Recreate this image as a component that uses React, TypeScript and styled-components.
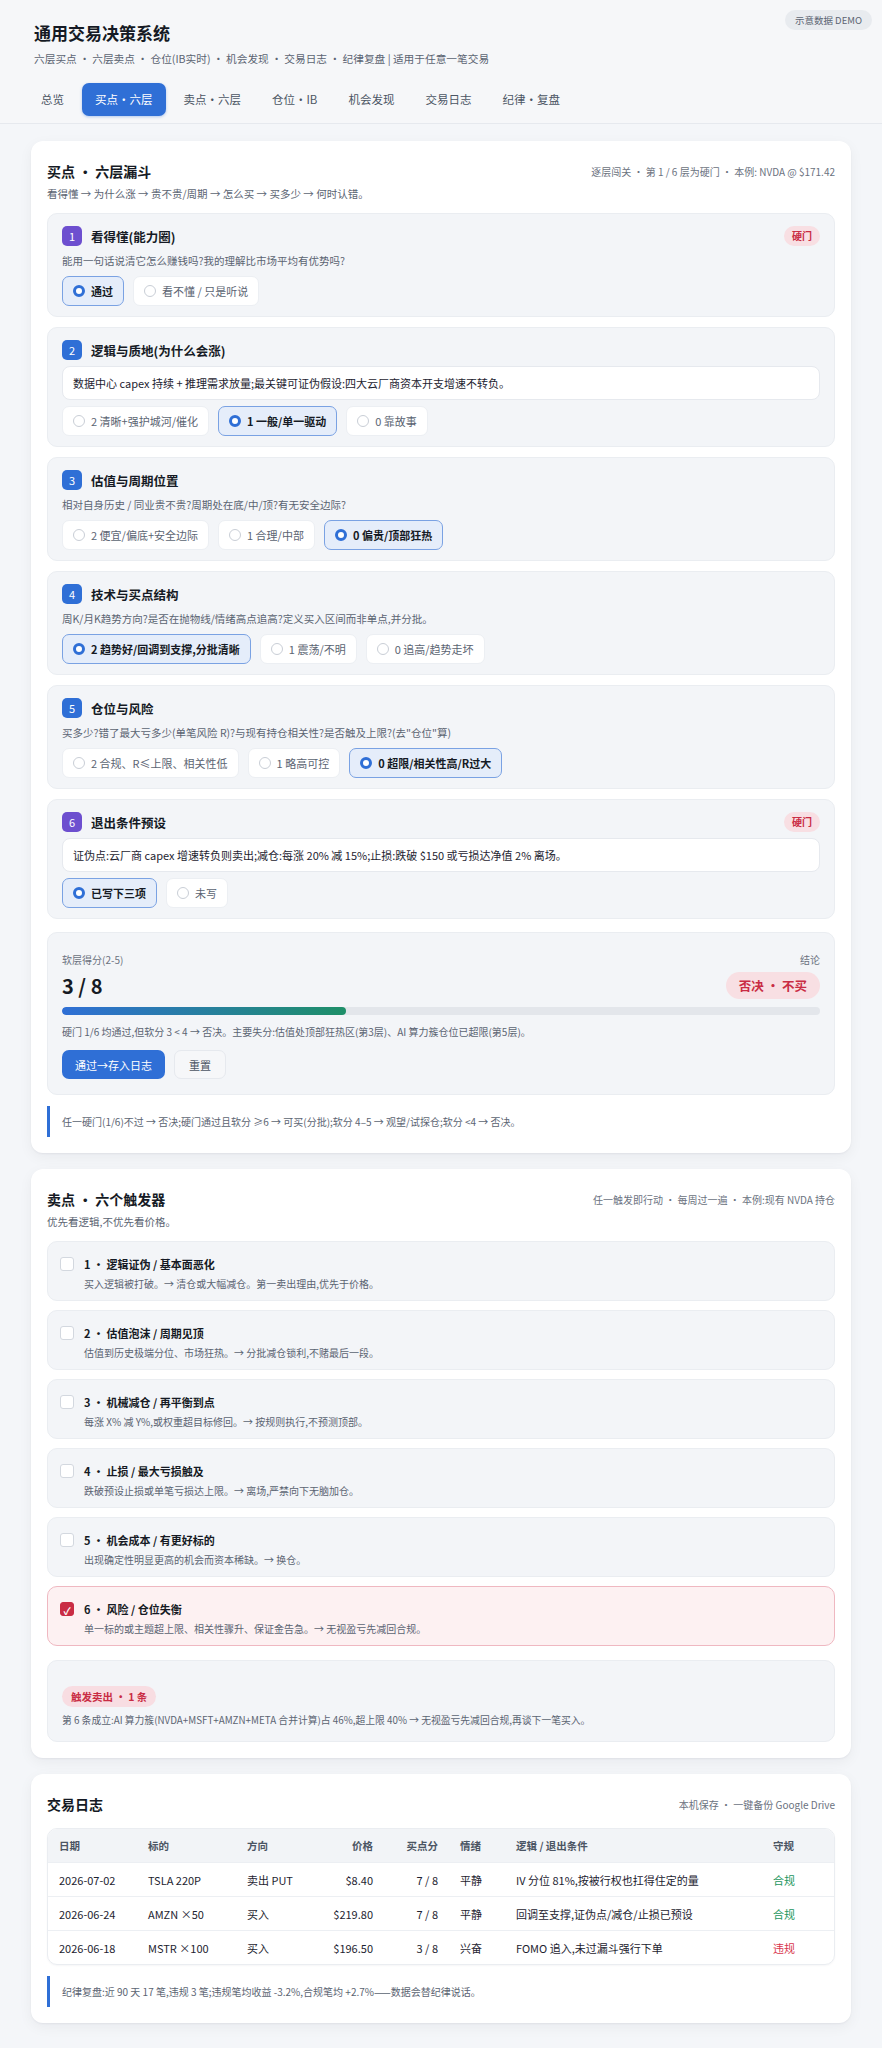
import styled, { createGlobalStyle } from 'styled-components';

const GlobalStyle = createGlobalStyle`
  * { box-sizing: border-box; }
  body {
    margin: 0;
    background: #f4f6f9;
    color: #1d2330;
    font-family: "Noto Sans CJK SC", "Noto Sans", sans-serif;
  }
`;

const BLUE = '#2f6fd6';
const PURPLE = '#6d4fcf';
const RED = '#c92c44';

interface Layer {
  title: string;
  tone: 'purple' | 'blue';
  hard?: boolean;
  desc?: string;
  input?: string;
  options: string[];
  selected: number;
}

const layers: Layer[] = [
  {
    title: '看得懂(能力圈)',
    tone: 'purple',
    hard: true,
    desc: '能用一句话说清它怎么赚钱吗?我的理解比市场平均有优势吗?',
    options: ['通过', '看不懂 / 只是听说'],
    selected: 0
  },
  {
    title: '逻辑与质地(为什么会涨)',
    tone: 'blue',
    input: '数据中心 capex 持续 + 推理需求放量;最关键可证伪假设:四大云厂商资本开支增速不转负。',
    options: ['2 清晰+强护城河/催化', '1 一般/单一驱动', '0 靠故事'],
    selected: 1
  },
  {
    title: '估值与周期位置',
    tone: 'blue',
    desc: '相对自身历史 / 同业贵不贵?周期处在底/中/顶?有无安全边际?',
    options: ['2 便宜/偏底+安全边际', '1 合理/中部', '0 偏贵/顶部狂热'],
    selected: 2
  },
  {
    title: '技术与买点结构',
    tone: 'blue',
    desc: '周K/月K趋势方向?是否在抛物线/情绪高点追高?定义买入区间而非单点,并分批。',
    options: ['2 趋势好/回调到支撑,分批清晰', '1 震荡/不明', '0 追高/趋势走坏'],
    selected: 0
  },
  {
    title: '仓位与风险',
    tone: 'blue',
    desc: '买多少?错了最大亏多少(单笔风险 R)?与现有持仓相关性?是否触及上限?(去"仓位"算)',
    options: ['2 合规、R≤上限、相关性低', '1 略高可控', '0 超限/相关性高/R过大'],
    selected: 2
  },
  {
    title: '退出条件预设',
    tone: 'purple',
    hard: true,
    input: '证伪点:云厂商 capex 增速转负则卖出;减仓:每涨 20% 减 15%;止损:跌破 $150 或亏损达净值 2% 离场。',
    options: ['已写下三项', '未写'],
    selected: 0
  }
];

const triggers = [
  { title: '逻辑证伪 / 基本面恶化', desc: '买入逻辑被打破。→ 清仓或大幅减仓。第一卖出理由,优先于价格。' },
  { title: '估值泡沫 / 周期见顶', desc: '估值到历史极端分位、市场狂热。→ 分批减仓锁利,不赌最后一段。' },
  { title: '机械减仓 / 再平衡到点', desc: '每涨 X% 减 Y%,或权重超目标修回。→ 按规则执行,不预测顶部。' },
  { title: '止损 / 最大亏损触及', desc: '跌破预设止损或单笔亏损达上限。→ 离场,严禁向下无脑加仓。' },
  { title: '机会成本 / 有更好标的', desc: '出现确定性明显更高的机会而资本稀缺。→ 换仓。' },
  { title: '风险 / 仓位失衡', desc: '单一标的或主题超上限、相关性骤升、保证金告急。→ 无视盈亏先减回合规。', hit: true }
];

const trades = [
  { date: '2026-07-02', ticker: 'TSLA 220P', side: '卖出 PUT', price: '$8.40', score: '7 / 8', mood: '平静', logic: 'IV 分位 81%,按被行权也扛得住定的量', ok: true },
  { date: '2026-06-24', ticker: 'AMZN ×50', side: '买入', price: '$219.80', score: '7 / 8', mood: '平静', logic: '回调至支撑,证伪点/减仓/止损已预设', ok: true },
  { date: '2026-06-18', ticker: 'MSTR ×100', side: '买入', price: '$196.50', score: '3 / 8', mood: '兴奋', logic: 'FOMO 追入,未过漏斗强行下单', ok: false }
];

const tabs = ['总览', '买点·六层', '卖点·六层', '仓位·IB', '机会发现', '交易日志', '纪律·复盘'];

export default function App() {
  const soft = 3;
  return (
    <>
      <GlobalStyle />
      <Header>
        <TopBar>
          <Brand>
            <AppTitle>通用交易决策系统</AppTitle>
            <AppSub>六层买点 · 六层卖点 · 仓位(IB实时) · 机会发现 · 交易日志 · 纪律复盘 | 适用于任意一笔交易</AppSub>
          </Brand>
          <DemoBadge>示意数据 DEMO</DemoBadge>
        </TopBar>
        <TabRow>
          {tabs.map((t, i) => (
            <Tab key={t} $active={i === 1}>{t}</Tab>
          ))}
        </TabRow>
      </Header>

      <Main>
        <Card>
          <CardHead>
            <CardTitle>买点 · 六层漏斗</CardTitle>
            <CardMeta>逐层闯关 · 第 1 / 6 层为硬门 · 本例: NVDA @ $171.42</CardMeta>
          </CardHead>
          <CardLead>看得懂 → 为什么涨 → 贵不贵/周期 → 怎么买 → 买多少 → 何时认错。</CardLead>

          <Stack>
            {layers.map((l, i) => (
              <LayerBox key={l.title}>
                <LayerHead>
                  <NumBadge $tone={l.tone}>{i + 1}</NumBadge>
                  <LayerTitle>{l.title}</LayerTitle>
                  {l.hard && <HardTag>硬门</HardTag>}
                </LayerHead>
                {l.desc && <LayerDesc>{l.desc}</LayerDesc>}
                {l.input && <LayerInput>{l.input}</LayerInput>}
                <OptionRow>
                  {l.options.map((o, j) => (
                    <Option key={o} $selected={j === l.selected}>
                      <Radio $on={j === l.selected} />
                      {o}
                    </Option>
                  ))}
                </OptionRow>
              </LayerBox>
            ))}
          </Stack>

          <ScoreBox>
            <ScoreTop>
              <div>
                <ScoreLabel>软层得分(2-5)</ScoreLabel>
                <ScoreValue>{soft} / 8</ScoreValue>
              </div>
              <Verdict>
                <ScoreLabel>结论</ScoreLabel>
                <VerdictPill>否决 · 不买</VerdictPill>
              </Verdict>
            </ScoreTop>
            <Progress>
              <ProgressFill style={{ width: `${(soft / 8) * 100}%` }} />
            </Progress>
            <ScoreNote>硬门 1/6 均通过,但软分 3 &lt; 4 → 否决。主要失分:估值处顶部狂热区(第3层)、AI 算力簇仓位已超限(第5层)。</ScoreNote>
            <ButtonRow>
              <PrimaryButton>通过→存入日志</PrimaryButton>
              <GhostButton>重置</GhostButton>
            </ButtonRow>
          </ScoreBox>

          <RuleNote>任一硬门(1/6)不过 → 否决;硬门通过且软分 ≥6 → 可买(分批);软分 4–5 → 观望/试探仓;软分 &lt;4 → 否决。</RuleNote>
        </Card>

        <Card>
          <CardHead>
            <CardTitle>卖点 · 六个触发器</CardTitle>
            <CardMeta>任一触发即行动 · 每周过一遍 · 本例:现有 NVDA 持仓</CardMeta>
          </CardHead>
          <CardLead>优先看逻辑,不优先看价格。</CardLead>

          <Stack $gap={9}>
            {triggers.map((t, i) => (
              <TriggerBox key={t.title} $hit={!!t.hit}>
                <CheckBox $on={!!t.hit}>{t.hit ? '✓' : ''}</CheckBox>
                <div>
                  <TriggerTitle>{i + 1} · {t.title}</TriggerTitle>
                  <TriggerDesc>{t.desc}</TriggerDesc>
                </div>
              </TriggerBox>
            ))}
          </Stack>

          <SummaryBox>
            <AlertPill>触发卖出 · 1 条</AlertPill>
            <SummaryText>第 6 条成立:AI 算力簇(NVDA+MSFT+AMZN+META 合并计算)占 46%,超上限 40% → 无视盈亏先减回合规,再谈下一笔买入。</SummaryText>
          </SummaryBox>
        </Card>

        <Card>
          <CardHead>
            <CardTitle>交易日志</CardTitle>
            <CardMeta>本机保存 · 一键备份 Google Drive</CardMeta>
          </CardHead>

          <TableWrap>
            <HeadRow>
              <Cell>日期</Cell>
              <Cell>标的</Cell>
              <Cell>方向</Cell>
              <Cell $right>价格</Cell>
              <Cell $right>买点分</Cell>
              <Cell>情绪</Cell>
              <Cell>逻辑 / 退出条件</Cell>
              <Cell>守规</Cell>
            </HeadRow>
            {trades.map((r) => (
              <BodyRow key={r.date}>
                <Cell>{r.date}</Cell>
                <Cell>{r.ticker}</Cell>
                <Cell>{r.side}</Cell>
                <Cell $right>{r.price}</Cell>
                <Cell $right>{r.score}</Cell>
                <Cell>{r.mood}</Cell>
                <Cell>{r.logic}</Cell>
                <Status $ok={r.ok}>{r.ok ? '合规' : '违规'}</Status>
              </BodyRow>
            ))}
          </TableWrap>

          <RuleNote>纪律复盘:近 90 天 17 笔,违规 3 笔;违规笔均收益 -3.2%,合规笔均 +2.7%——数据会替纪律说话。</RuleNote>
        </Card>
      </Main>
    </>
  );
}

/* header */

const Header = styled.header`
  padding: 10px 10px 7px 34px;
  border-bottom: 1px solid #e6e9ee;
  background: #f6f7f9;
`;

const TopBar = styled.div`
  display: flex;
  justify-content: space-between;
  align-items: flex-start;
`;

const Brand = styled.div`
  padding-top: 11px;
`;

const AppTitle = styled.h1`
  margin: 0;
  font-size: 17px;
  line-height: 24px;
  font-weight: 700;
  color: #151a24;
`;

const AppSub = styled.div`
  margin-top: 7px;
  font-size: 10.7px;
  line-height: 14px;
  color: #5b6472;
`;

const DemoBadge = styled.span`
  padding: 0 10px;
  height: 20px;
  line-height: 20px;
  border-radius: 10px;
  background: #e8ebef;
  color: #5b6472;
  font-size: 9.5px;
`;

const TabRow = styled.nav`
  display: flex;
  gap: 5px;
  margin: 17px 0 0 -6px;
`;

const Tab = styled.div<{ $active?: boolean }>`
  height: 33px;
  line-height: 33px;
  padding: 0 13px;
  border-radius: 7px;
  font-size: 11.5px;
  background: ${(p) => (p.$active ? BLUE : 'transparent')};
  color: ${(p) => (p.$active ? '#fff' : '#4b5563')};
  box-shadow: ${(p) => (p.$active ? '0 1px 3px rgba(47,111,214,0.35)' : 'none')};
`;

/* cards */

const Main = styled.main`
  display: flex;
  flex-direction: column;
  gap: 16px;
  padding: 17px 31px 27px;
`;

const Card = styled.section`
  background: #fff;
  border-radius: 12px;
  padding: 20px 16px 16px;
  box-shadow: 0 1px 2px rgba(16, 24, 40, 0.05), 0 4px 14px rgba(16, 24, 40, 0.05);
`;

const CardHead = styled.div`
  display: flex;
  justify-content: space-between;
  align-items: center;
`;

const CardTitle = styled.h2`
  margin: 0;
  font-size: 14px;
  line-height: 20px;
  font-weight: 700;
  color: #151a24;
`;

const CardMeta = styled.span`
  font-size: 10px;
  color: #6b7280;
`;

const CardLead = styled.p`
  margin: 5px 0 12px;
  font-size: 10.5px;
  line-height: 15px;
  color: #5b6472;
`;

const Stack = styled.div<{ $gap?: number }>`
  display: flex;
  flex-direction: column;
  gap: ${(p) => p.$gap ?? 10}px;
`;

/* buy layers */

const LayerBox = styled.div`
  display: flex;
  flex-direction: column;
  gap: 6px;
  padding: 12px 14px 10px;
  background: #f3f5f8;
  border: 1px solid #eaedf1;
  border-radius: 10px;
`;

const LayerHead = styled.div`
  display: flex;
  align-items: center;
  gap: 9px;
`;

const NumBadge = styled.span<{ $tone: 'purple' | 'blue' }>`
  width: 20px;
  height: 20px;
  border-radius: 5px;
  display: grid;
  place-items: center;
  font-size: 11px;
  color: #fff;
  background: ${(p) => (p.$tone === 'purple' ? PURPLE : BLUE)};
`;

const LayerTitle = styled.span`
  font-size: 12.5px;
  font-weight: 700;
  color: #151a24;
`;

const HardTag = styled.span`
  margin-left: auto;
  height: 20px;
  line-height: 20px;
  padding: 0 8px;
  border-radius: 10px;
  background: #f8dfe3;
  color: ${RED};
  font-size: 10px;
  font-weight: 700;
`;

const LayerDesc = styled.div`
  font-size: 10.5px;
  line-height: 18px;
  color: #5b6472;
`;

const LayerInput = styled.div`
  height: 34px;
  line-height: 32px;
  padding: 0 10px;
  background: #fff;
  border: 1px solid #e6e9ee;
  border-radius: 8px;
  font-size: 11px;
  color: #1d2330;
`;

const OptionRow = styled.div`
  display: flex;
  gap: 9px;
`;

const Option = styled.div<{ $selected?: boolean }>`
  display: flex;
  align-items: center;
  gap: 6px;
  height: 30px;
  padding: 0 10px;
  border-radius: 7px;
  font-size: 11px;
  border: 1px solid ${(p) => (p.$selected ? '#7aa2e3' : '#eceff3')};
  background: ${(p) => (p.$selected ? '#e5edfa' : '#fff')};
  color: ${(p) => (p.$selected ? '#151a24' : '#5b6472')};
  font-weight: ${(p) => (p.$selected ? 700 : 400)};
`;

const Radio = styled.span<{ $on?: boolean }>`
  width: 12px;
  height: 12px;
  border-radius: 50%;
  flex: none;
  background: #fff;
  border: ${(p) => (p.$on ? `3.5px solid ${BLUE}` : '1px solid #c9ced6')};
`;

/* score */

const ScoreBox = styled.div`
  margin-top: 13px;
  padding: 20px 14px 15px;
  background: #f3f5f8;
  border: 1px solid #eaedf1;
  border-radius: 10px;
`;

const ScoreTop = styled.div`
  display: flex;
  justify-content: space-between;
  align-items: flex-start;
`;

const ScoreLabel = styled.div`
  font-size: 10px;
  line-height: 14px;
  color: #6b7280;
`;

const ScoreValue = styled.div`
  margin-top: 6px;
  font-size: 20px;
  line-height: 26px;
  font-weight: 700;
  color: #151a24;
`;

const Verdict = styled.div`
  display: flex;
  flex-direction: column;
  align-items: flex-end;
  gap: 5px;
`;

const VerdictPill = styled.span`
  height: 27px;
  line-height: 27px;
  padding: 0 13px;
  border-radius: 14px;
  background: #f8dfe3;
  color: ${RED};
  font-size: 12.5px;
  font-weight: 700;
`;

const Progress = styled.div`
  margin-top: 8px;
  height: 8px;
  border-radius: 4px;
  background: #e3e6eb;
  overflow: hidden;
`;

const ProgressFill = styled.div`
  height: 100%;
  border-radius: 4px;
  background: linear-gradient(90deg, ${BLUE}, #1e8f68);
`;

const ScoreNote = styled.div`
  margin-top: 9px;
  font-size: 10px;
  line-height: 15px;
  color: #5b6472;
`;

const ButtonRow = styled.div`
  display: flex;
  gap: 9px;
  margin-top: 11px;
`;

const PrimaryButton = styled.button`
  height: 29px;
  padding: 0 13px;
  border: none;
  border-radius: 7px;
  background: ${BLUE};
  color: #fff;
  font: inherit;
  font-size: 11px;
`;

const GhostButton = styled.button`
  height: 29px;
  padding: 0 14px;
  border: 1px solid #e6e9ee;
  border-radius: 7px;
  background: #f6f7f9;
  color: #4b5563;
  font: inherit;
  font-size: 11px;
`;

const RuleNote = styled.div`
  margin-top: 11px;
  padding: 8px 12px;
  border-left: 3px solid ${BLUE};
  font-size: 10px;
  line-height: 15px;
  color: #5b6472;
`;

/* sell triggers */

const TriggerBox = styled.div<{ $hit?: boolean }>`
  display: grid;
  grid-template-columns: 14px 1fr;
  column-gap: 10px;
  height: 60px;
  padding: 13px 12px 0;
  border-radius: 10px;
  border: 1px solid ${(p) => (p.$hit ? '#efb8c1' : '#eaedf1')};
  background: ${(p) => (p.$hit ? '#fdf1f2' : '#f3f5f8')};
`;

const CheckBox = styled.span<{ $on?: boolean }>`
  width: 14px;
  height: 14px;
  margin-top: 2px;
  border-radius: 3px;
  display: grid;
  place-items: center;
  font-size: 10px;
  font-weight: 700;
  color: #fff;
  border: 1px solid ${(p) => (p.$on ? RED : '#d3d8df')};
  background: ${(p) => (p.$on ? RED : '#fff')};
`;

const TriggerTitle = styled.div`
  font-size: 11px;
  line-height: 18px;
  font-weight: 700;
  color: #151a24;
`;

const TriggerDesc = styled.div`
  margin-top: 4px;
  font-size: 10px;
  line-height: 14px;
  color: #5b6472;
`;

const SummaryBox = styled.div`
  margin-top: 14px;
  padding: 21px 14px 13px;
  background: #f3f5f8;
  border: 1px solid #eaedf1;
  border-radius: 10px;
`;

const AlertPill = styled.span`
  display: inline-block;
  height: 21px;
  line-height: 21px;
  padding: 0 9px;
  border-radius: 11px;
  background: #f8dde2;
  color: ${RED};
  font-size: 10.5px;
  font-weight: 700;
`;

const SummaryText = styled.div`
  margin-top: 6px;
  font-size: 9.8px;
  line-height: 15px;
  color: #5b6472;
`;

/* trade log */

const TableWrap = styled.div`
  margin-top: 14px;
  border: 1px solid #eaedf1;
  border-radius: 10px;
  overflow: hidden;
  box-shadow: 0 1px 2px rgba(16, 24, 40, 0.04);
`;

const columns = '89px 99px 80px 68px 65px 56px 257px 1fr';

const HeadRow = styled.div`
  display: grid;
  grid-template-columns: ${columns};
  align-items: center;
  height: 33px;
  background: #f2f4f7;
  font-size: 10.5px;
  font-weight: 700;
  color: #4b5563;
`;

const BodyRow = styled.div`
  display: grid;
  grid-template-columns: ${columns};
  align-items: center;
  height: 34px;
  border-top: 1px solid #eceff3;
  font-size: 11px;
  color: #1d2330;
`;

const Cell = styled.div<{ $right?: boolean }>`
  padding: 0 11px;
  white-space: nowrap;
  text-align: ${(p) => (p.$right ? 'right' : 'left')};
`;

const Status = styled(Cell)<{ $ok: boolean }>`
  color: ${(p) => (p.$ok ? '#23965d' : '#d8344c')};
`;
